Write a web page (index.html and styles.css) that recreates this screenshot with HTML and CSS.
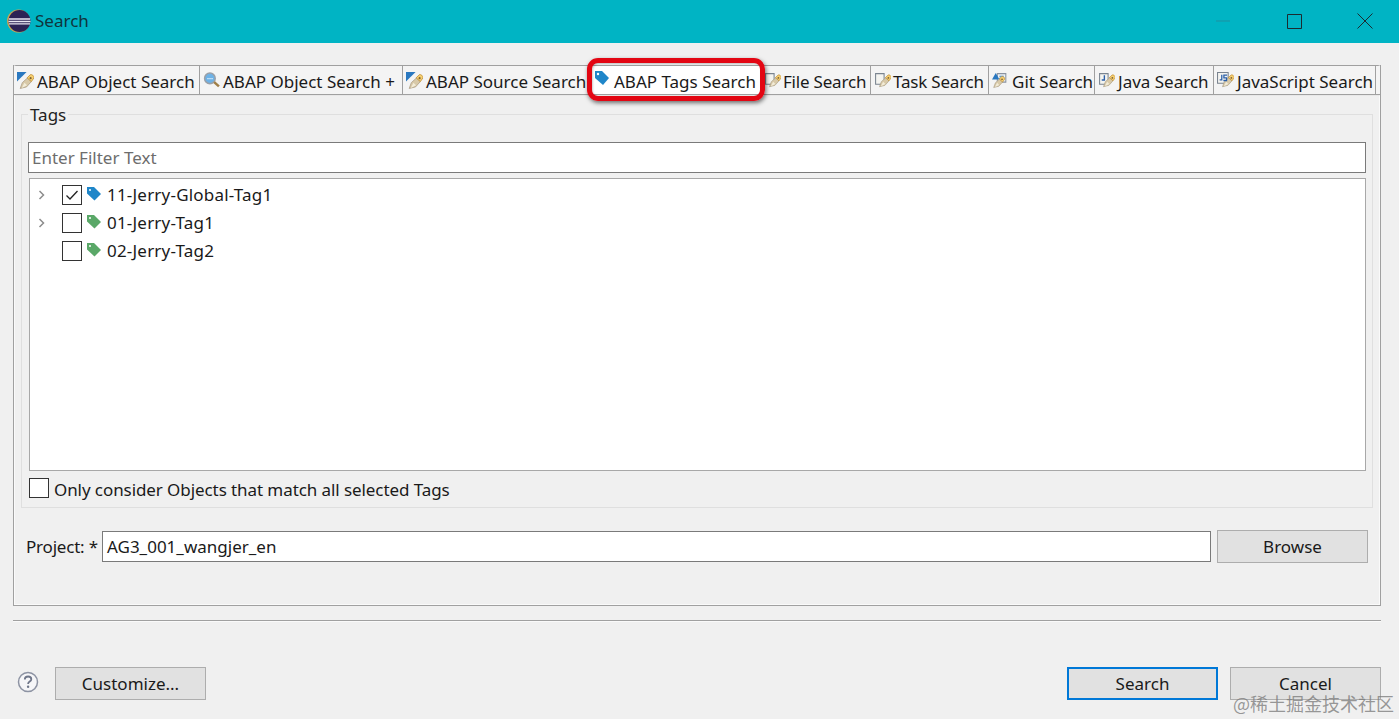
FILE: index.html
```html
<!DOCTYPE html>
<html lang="en">
<head>
<meta charset="utf-8">
<title>Search</title>
<link rel="stylesheet" href="styles.css">
</head>
<body>
<svg class="defs" width="0" height="0" aria-hidden="true">
  <defs>
    <g id="pencil">
      <path d="M2 14.500l2-5.500 5-4.500 3.500 3.500-4.500 5z" fill="#d8c9a8" stroke="#a89a80" stroke-width=".7"/>
      <path d="M8.500 4.500L11.500 1.500c1.500-.5 3.500 1 3.500 3l-2.500 3.500z" fill="#f6cf70" stroke="#c0913a" stroke-width=".8"/>
      <circle cx="11.800" cy="4.800" r="1" fill="#7d6236"/>
      <path d="M3.500 14l2.500-5 2.500 2.500z" fill="#f2ecd8"/>
    </g>
    <g id="abap">
      <path d="M0 0h9L0 9z" fill="#2a78c0"/>
      <use href="#pencil" transform="translate(1 1)"/>
    </g>
    <g id="doc">
      <path d="M1.500 1.500h8v10h-8z" fill="#f4f4f0" stroke="#7a8490"/>
      <use href="#pencil" transform="translate(3.500 1.500) scale(.85)"/>
    </g>
  </defs>
</svg>

<header class="titlebar">
  <svg class="eclipse" viewBox="0 0 24 24" aria-hidden="true">
    <circle cx="11.500" cy="12" r="11.500" fill="#c9a552"/>
    <circle cx="12.500" cy="12" r="11" fill="#2c2255"/>
    <path d="M1.800 9.300h21.400v1.400H1.800zM1.500 11.800h22v1.400H1.500zM2 14.300h21v1.300H2z" fill="#e8e6f2"/>
  </svg>
  <span class="title">Search</span>
  <div class="winctl">
    <span class="ctl"><svg width="16" height="16" viewBox="0 0 16 16"><path d="M1 8h14" stroke="#1f8fa0"/></svg></span>
    <span class="ctl"><svg width="16" height="16" viewBox="0 0 16 16"><path d="M1.500 1.500h14v14h-14z" fill="none" stroke="#1c2b30"/></svg></span>
    <span class="ctl"><svg width="16" height="16" viewBox="0 0 16 16"><path d="M.5.500l15 15M15.500.500l-15 15" fill="none" stroke="#1c2b30"/></svg></span>
  </div>
</header>

<main class="dialog">
  <section class="folder">
    <nav class="tabs">
      <div class="tab"><svg class="ticon" viewBox="0 0 16 16"><use href="#abap"/></svg>ABAP Object Search</div>
      <div class="tab"><svg class="ticon" viewBox="0 0 16 16"><circle cx="6.500" cy="6" r="5" fill="#6eb2e6" stroke="#9aa0a8" stroke-width="1.400"/><path d="M10.500 9.500l4.500 4" stroke="#a07f48" stroke-width="2.400"/><path d="M4.200 6.300h1M6.100 6.300h1M8 6.300h1" stroke="#fff" stroke-width="1.200"/></svg>ABAP Object Search +</div>
      <div class="tab"><svg class="ticon" viewBox="0 0 16 16"><use href="#abap"/></svg>ABAP Source Search</div>
      <div class="tab tab-active"><svg class="ticon tag-icon" viewBox="0 0 16 16"><path d="M1 1h7l7 7-6 7-8-7z" fill="#1f86c9"/><circle cx="4" cy="4" r="1.200" fill="#fff"/></svg>ABAP Tags Search</div>
      <div class="tab tab-tight"><svg class="ticon" viewBox="0 0 16 16"><use href="#doc"/></svg>File Search</div>
      <div class="tab tab-tight"><svg class="ticon" viewBox="0 0 16 16"><use href="#doc"/></svg>Task Search</div>
      <div class="tab"><svg class="ticon" viewBox="0 0 16 16"><path d="M5 1.500h8v8H5z" fill="#eef2f6" stroke="#8a93a0"/><path d="M7 4h4M7 6h4" stroke="#3b7fb8"/><path d="M0 7l3.500-6L7 7z" fill="#2a78c0"/><use href="#pencil" transform="translate(0 3) scale(.8)"/></svg>Git Search</div>
      <div class="tab"><svg class="ticon" viewBox="0 0 16 16"><use href="#doc"/><path d="M6 3v4.500H3.500" fill="none" stroke="#2b5fa8" stroke-width="1.300"/></svg>Java Search</div>
      <div class="tab"><svg class="ticon" viewBox="0 0 16 16"><path d="M.5.500h10v10H.5z" fill="#f4f4f0" stroke="#7a8490"/><use href="#pencil" transform="translate(3.500 1.500) scale(.85)"/><path d="M4.500 2.500v5H2.500M9.500 3H6.500v2.500h2.500v2.500H6" fill="none" stroke="#2b5fa8" stroke-width="1.200"/></svg>JavaScript Search</div>
      <div class="tab tab-stub"></div>
    </nav>

    <div class="pane">
      <fieldset class="group">
        <legend class="group-label">Tags</legend>
        <div class="filter">Enter Filter Text</div>
        <div class="tree">
          <div class="row">
            <svg class="arrow" viewBox="0 0 8 10"><path d="M1.500 1l4 4-4 4" fill="none" stroke="#8c8c8c" stroke-width="1.500"/></svg>
            <span class="check"><svg viewBox="0 0 18 18"><path d="M3.500 9.500l3.500 3.500 7.500-8" fill="none" stroke="#222" stroke-width="1.300"/></svg></span>
            <svg class="rowtag" viewBox="0 0 16 16"><path d="M1 1h7l7 7-6.500 6.500L1 7.500z" fill="#1f86c9"/><circle cx="4" cy="4" r="1" fill="#fff"/></svg>
            <span class="rowtext">11-Jerry-Global-Tag1</span>
          </div>
          <div class="row">
            <svg class="arrow" viewBox="0 0 8 10"><path d="M1.500 1l4 4-4 4" fill="none" stroke="#8c8c8c" stroke-width="1.500"/></svg>
            <span class="check"></span>
            <svg class="rowtag" viewBox="0 0 16 16"><path d="M1 1h7l7 7-6.500 6.500L1 7.500z" fill="#5aa868"/><circle cx="4" cy="4" r="1" fill="#fff"/></svg>
            <span class="rowtext">01-Jerry-Tag1</span>
          </div>
          <div class="row">
            <span class="arrow"></span>
            <span class="check"></span>
            <svg class="rowtag" viewBox="0 0 16 16"><path d="M1 1h7l7 7-6.500 6.500L1 7.500z" fill="#5aa868"/><circle cx="4" cy="4" r="1" fill="#fff"/></svg>
            <span class="rowtext">02-Jerry-Tag2</span>
          </div>
        </div>
        <div class="only">
          <span class="check"></span>
          <span class="only-text">Only consider Objects that match all selected Tags</span>
        </div>
      </fieldset>
      <div class="project">
        <span class="project-label">Project: *</span>
        <div class="project-input">AG3_001_wangjer_en</div>
        <div class="btn btn-browse">Browse</div>
      </div>
    </div>
  </section>

  <hr class="sep">

  <footer class="actions">
    <svg class="help" viewBox="0 0 22 22" aria-hidden="true">
      <circle cx="11" cy="11" r="9.500" fill="#f6f6f8" stroke="#8d93a3" stroke-width="1.500"/>
      <path d="M7.800 8.500c0-2 1.500-3 3.300-3s3.200 1 3.200 2.700c0 2.500-3.200 2.300-3.200 4.800" fill="none" stroke="#6f7689" stroke-width="1.800"/>
      <circle cx="11.100" cy="15.800" r="1.200" fill="#6f7689"/>
    </svg>
    <div class="btn">Customize...</div>
    <div class="spacer"></div>
    <div class="btn btn-default">Search</div>
    <div class="btn">Cancel</div>
  </footer>
</main>

<div class="highlight"></div>
<div class="watermark">@稀土掘金技术社区</div>
</body>
</html>
```
FILE: styles.css
```css
* { box-sizing: border-box; }
html, body { margin: 0; height: 719px; overflow: hidden; }
body {
  position: relative;
  background: #f0f0f0;
  color: #1a1a1a;
  font-family: "Noto Sans", "Open Sans", sans-serif;
  font-size: 17px;
}
.defs { position: absolute; }

.titlebar {
  height: 43px;
  background: #00b4c4;
  display: flex;
  align-items: center;
  padding-left: 7px;
  color: #10343c;
}
.eclipse { width: 24px; height: 24px; margin: -2px 4px 0 0; }
.title { font-size: 17px; padding-bottom: 2px; }
.winctl { margin-left: auto; display: flex; gap: 55px; padding: 0 26px 2px 0; }
.ctl { width: 16px; height: 16px; display: block; }
.ctl svg { display: block; }

.dialog {
  padding: 22px 18px 0 13px;
  height: 676px;
  display: flex;
  flex-direction: column;
}
.folder {
  height: 541px;
  border: 1px solid #a0a0a0;
  border-top: 0;
  display: flex;
  flex-direction: column;
  background: #f0f0f0;
}
.tabs {
  height: 30px;
  margin: 0 -1px;
  display: grid;
  grid-template-columns: 186px 203px 188px 170px 110px 118px 106px 119px 162px 1fr;
  border: 1px solid #a0a0a0;
  border-radius: 3px 3px 0 0;
}
.tab {
  display: flex;
  align-items: center;
  padding: 3px 0 0 3px;
  gap: 3px;
  border-right: 1px solid #a0a0a0;
  white-space: nowrap;
  overflow: hidden;
  background: #f4f4f4;
  font-size: 17px;
  line-height: 25px;
}
.tab-active { background: #fff; border-right: 0; gap: 4px; }
.tab-tight { letter-spacing: -.2px; gap: 2px; }
.tab-stub { border-right: 0; }
.ticon { width: 17px; height: 17px; flex: none; margin-top: -3px; }
.tag-icon { width: 16px; height: 16px; margin-top: -8px; }

.pane {
  flex: 1;
  padding: 12px 6px 0 6px;
  display: flex;
  flex-direction: column;
  border: 1px solid #fafafa;
  border-top-color: #e8e8e8;
}
.group {
  margin: -5px 0 0;
  padding: 0 6px;
  height: 405px;
  border: 1px solid #dfdfdf;
  min-width: 0;
}
.group-label { padding: 0 2px; margin-left: 0; line-height: 24px; font-size: 17px; height: 22px; color: #222; }
.filter {
  height: 31px;
  margin-top: 17px;
  border: 1px solid #7a7a7a;
  background: #fff;
  color: #6d6d6d;
  padding-left: 3px;
  line-height: 29px;
}
.tree {
  height: 293px;
  margin: 5px 0 0 1px;
  border: 1px solid #a8a8a8;
  background: #fff;
  padding-top: 2px;
}
.row { height: 28px; display: flex; align-items: center; }
.rowtext { letter-spacing: .2px; margin-top: -2px; }
.arrow { width: 8px; height: 10px; margin: 0 0 0 8px; display: block; }
.check {
  width: 20px;
  height: 20px;
  border: 1px solid #333;
  background: #fff;
  display: block;
  flex: none;
}
.check svg { display: block; width: 18px; height: 18px; }
.row .check { margin-left: 16px; }
.rowtag { width: 16px; height: 16px; margin: -3px 5px 0 4px; flex: none; }

.only { display: flex; align-items: center; gap: 5px; height: 33px; padding-left: 1px; }
.only-text { letter-spacing: -.08px; position: relative; top: 2px; }

.project { display: flex; align-items: center; margin-top: 22px; height: 33px; }
.project-label { width: 81px; padding-left: 5px; white-space: nowrap; letter-spacing: -.2px; }
.project-input {
  width: 1109px;
  height: 31px;
  border: 1px solid #7a7a7a;
  background: #fff;
  padding-left: 4px;
  line-height: 29px;
}
.btn {
  width: 151px;
  height: 33px;
  background: #e1e1e1;
  border: 1px solid #adadad;
  text-align: center;
  line-height: 31px;
  flex: none;
}
.btn-browse { margin-left: 6px; }
.btn-default { border: 2px solid #0078d7; line-height: 29px; margin-right: 12px; }

.sep { margin: 14px 0 0; border: 0; border-top: 1px solid #a0a0a0; border-bottom: 1px solid #fafafa; height: 2px; }
.actions { display: flex; align-items: center; margin-top: 45px; height: 33px; }
.help { width: 22px; height: 22px; margin: 0 16px 3px 4px; }
.spacer { flex: 1; }

.highlight {
  position: absolute;
  left: 587px;
  top: 58px;
  width: 178px;
  height: 43px;
  border: 5px solid #e30613;
  border-radius: 11px;
  box-shadow: 1px 2px 4px rgba(0,0,0,.55), inset 1px 1px 2px rgba(0,0,0,.2);
}
.watermark {
  position: absolute;
  left: 1233px;
  top: 692px;
  font-family: "Noto Sans CJK SC", sans-serif;
  font-size: 18px;
  line-height: 22px;
  color: rgba(120,120,120,.75);
  white-space: nowrap;
}
```
